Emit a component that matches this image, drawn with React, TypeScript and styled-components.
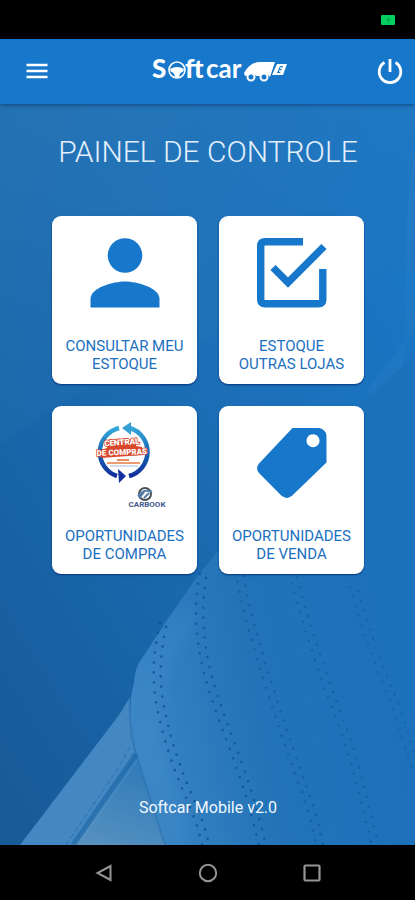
import React from "react";
import styled, { createGlobalStyle } from "styled-components";

const blue = "#1677cb";

const GlobalStyle = createGlobalStyle`
  *, *::before, *::after { box-sizing: border-box; }
  body {
    margin: 0;
    background: #000;
    font-family: Roboto, "Liberation Sans", sans-serif;
  }
`;

const Screen = styled.div`
  display: flex;
  flex-direction: column;
  min-height: 100vh;
`;

const StatusBar = styled.div`
  display: flex;
  align-items: center;
  justify-content: flex-end;
  height: 39px;
  padding: 0 20px;
  background: #000;
`;

const Header = styled.header`
  position: relative;
  z-index: 1;
  display: grid;
  grid-template-columns: 48px 1fr 48px;
  align-items: center;
  height: 65px;
  padding: 0 1px 2px 13px;
  background: ${blue};
  box-shadow: 0 1px 4px rgba(0, 30, 70, 0.55);
`;

const IconButton = styled.button`
  display: flex;
  align-items: center;
  justify-content: center;
  height: 48px;
  padding: 0;
  border: 0;
  background: none;
  color: #fff;
  cursor: pointer;
`;

const Brand = styled.div`
  display: flex;
  justify-content: center;
`;

const Main = styled.main`
  position: relative;
  z-index: 0;
  flex: 1;
  display: flex;
  flex-direction: column;
  padding: 30px 51px 26px 52px;
  background: #1c6db3;
`;

const Backdrop = styled.svg`
  position: absolute;
  inset: 0;
  z-index: -1;
  width: 100%;
  height: 100%;
`;

const Title = styled.h1`
  margin: 0 0 46px;
  color: #e3effb;
  font-size: 30px;
  font-weight: 300;
  line-height: 36px;
  text-align: center;
  white-space: nowrap;
`;

const CardGrid = styled.div`
  display: grid;
  grid-template-columns: 1fr 1fr;
  gap: 22px;
`;

const Card = styled.button`
  display: flex;
  flex-direction: column;
  align-items: center;
  justify-content: space-between;
  min-height: 168px;
  padding: 16px 0 11px;
  border: 0;
  border-radius: 9px;
  background: #fff;
  color: #1b70bf;
  font-family: inherit;
  font-size: 15px;
  line-height: 18px;
  cursor: pointer;
  box-shadow: 0 1px 2px #06357c;
`;

const CardLabel = styled.span`
  white-space: pre-line;
  text-align: center;
`;

const Version = styled.footer`
  margin-top: auto;
  color: #f1f7fd;
  font-size: 16px;
  line-height: 22px;
  text-align: center;
`;

const NavBar = styled.nav`
  display: flex;
  align-items: center;
  justify-content: center;
  gap: 56px;
  height: 55px;
  background: #000;
`;

const NavButton = styled(IconButton)`
  width: 48px;
  color: #969696;
`;

const PERFORATIONS = [
  { d: "M163 519C157 545 154 572 160 603S177 666 187 689S201 723 205 741", o: 0.75 },
  { d: "M203 470C198 492 198 518 202 545S218 606 232 643S253 705 262 741", o: 0.65 },
  { d: "M239 468C245 508 258 548 273 596S300 673 313 713L319 741", o: 0.5 },
  { d: "M292 470C304 514 318 560 338 612S358 679 375 741", o: 0.42 },
  { d: "M353 483C365 525 378 562 390 589S404 632 415 665", o: 0.32 },
];

function SeatBackdrop() {
  return (
    <Backdrop viewBox="0 0 415 741" preserveAspectRatio="xMidYMid slice" aria-hidden="true">
      <defs>
        <linearGradient id="wall" x1="1" y1="0" x2="0.1" y2="1">
          <stop offset="0" stopColor="#1978c9" />
          <stop offset="0.4" stopColor="#1c70b9" />
          <stop offset="0.75" stopColor="#1864a7" />
          <stop offset="1" stopColor="#185b99" />
        </linearGradient>
        <linearGradient id="haze" x1="0" y1="0" x2="0.5" y2="1">
          <stop offset="0" stopColor="#3479b0" stopOpacity="0.4" />
          <stop offset="1" stopColor="#2a78ba" stopOpacity="0.1" />
        </linearGradient>
        <linearGradient id="seat" gradientUnits="userSpaceOnUse" x1="130" y1="590" x2="400" y2="540">
          <stop offset="0" stopColor="#3c86c5" />
          <stop offset="0.15" stopColor="#327ebf" />
          <stop offset="0.45" stopColor="#2273b8" />
          <stop offset="1" stopColor="#1c71bb" />
        </linearGradient>
        <linearGradient id="fold" gradientUnits="userSpaceOnUse" x1="140" y1="660" x2="110" y2="745">
          <stop offset="0" stopColor="#307bb9" />
          <stop offset="1" stopColor="#5590bf" />
        </linearGradient>
        <filter id="soft" x="-20%" y="-20%" width="140%" height="140%">
          <feGaussianBlur stdDeviation="9" />
        </filter>
      </defs>
      <rect width="415" height="741" fill="url(#wall)" />
      <path d="M0 0H415V160C340 190 280 215 235 228C150 248 72 288 0 341Z" fill="url(#haze)" />
      <path d="M415 228L400 243L363 292C374 287 386 286 392 283L398 288L410 310C405 298 402 286 399 277Q403 260 405 246V150Q407 88 415 45Z" fill="#4089c7" opacity=".16" />
      <path
        d="M415 250L363 299L217 448L197 473L167 516L143 553Q135 562 134 579C127 603 131 630 138 656L165 741H415Z"
        fill="url(#seat)"
      />
      <path d="M192 510C165 545 145 570 150 625L178 735" fill="none" stroke="#529bd6" strokeWidth="12" opacity=".25" filter="url(#soft)" />
      <path d="M130 593L119 611L20 741H165L138 656Q130 630 130 593Z" fill="#4388c2" />
      <path d="M136 650L73 741H165L142 670Z" fill="url(#fold)" />
      <path d="M136 650L73 741" stroke="#1f69aa" strokeWidth="5" opacity=".7" />
      <path d="M138 655L78 741" stroke="#609bce" strokeWidth="1" opacity=".5" />
      <path d="M130 643L117 666L66 741" fill="none" stroke="#2c6faa" strokeWidth="1" strokeDasharray="5 3" />
      <path d="M130 593Q128 630 138 656L165 741" fill="none" stroke="#2468a7" strokeWidth="2" opacity=".4" />
      {PERFORATIONS.map((line) => (
        <g key={line.d} fill="none" stroke="#0c4c89" strokeLinecap="round" strokeWidth="2.600" opacity={line.o}>
          <path d={line.d} strokeDasharray="0 10" transform="translate(-3 0)" />
          <path d={line.d} strokeDasharray="0 10" strokeDashoffset="-4" transform="translate(4 0)" />
        </g>
      ))}
    </Backdrop>
  );
}

function SoftcarLogo() {
  return (
    <svg width="148" height="40" viewBox="-12 -6 148 40" role="img" aria-label="Softcar" fill="#fff">
      <g fontFamily="Lato, sans-serif" fontSize="26">
        <text x="0" y="21" fontWeight="900">S</text>
        <text x="33" y="21" fontWeight="900">ft</text>
        <text x="54" y="21" fontWeight="700">car</text>
      </g>
      <circle cx="25" cy="13" r="8" fill="none" stroke="#fff" strokeWidth="1.6" />
      <path d="M18 12Q25 8 32 12L31 15Q28 15 27 20H23Q22 15 19 15Z" />
      <path d="M92 16Q98 5 108 5H123L118 20Q115 15 111 19H104Q101 14 97 18L93 19Z" />
      <g fill={blue} stroke="#fff" strokeWidth="2">
        <circle cx="99" cy="20" r="3.500" />
        <circle cx="112" cy="20" r="3.500" />
      </g>
      <path d="M125 7H135L131 18H120Z" />
      <path d="M128 9H131L128 16H125Z" fill={blue} />
      <path d="M128 11h2M127 14h2" stroke="#fff" strokeWidth="1.500" />
    </svg>
  );
}

function PersonIcon() {
  return (
    <svg width="82" height="82" viewBox="-6 -6 82 82" fill={blue} aria-hidden="true">
      <circle cx="35" cy="17.5" r="17.3" />
      <path d="M.5 69.500V61C.5 49.500 23.500 43.500 35 43.500S69.500 49.500 69.500 61V69.500Z" />
    </svg>
  );
}

function CheckIcon() {
  return (
    <svg width="82" height="82" viewBox="-6 -6 82 82" fill="none" stroke={blue} strokeWidth="7.4" aria-hidden="true">
      <path d="M46 3.700H8.200Q3.700 3.700 3.700 8.200V61.300Q3.700 65.800 8.200 65.800H61.300Q65.800 65.800 65.800 61.300V31" />
      <path d="M16 29.500L31 44.500L67 8.500" />
    </svg>
  );
}

function TagIcon() {
  return (
    <svg width="82" height="82" viewBox="-6 -6 82 82" fill={blue} aria-hidden="true">
      <path
        fillRule="evenodd"
        d="M35.500 0H62Q65 0 67 2.500Q69.500 4.500 69.500 8V34.500L35 67.800Q30 72 24.500 67.800L2 45Q-2 40.500 2 35.500ZM56 6.200a6.500 6.500 0 1 0 .01 0Z"
      />
    </svg>
  );
}

function CentralIcon() {
  return (
    <svg width="92" height="92" viewBox="-5 0 92 92" aria-hidden="true">
      <defs>
        <linearGradient id="ring" x1="0" y1="0" x2="0" y2="1">
          <stop offset="0" stopColor="#35a8d8" />
          <stop offset="0.5" stopColor="#1467b4" />
          <stop offset="1" stopColor="#142f9d" />
        </linearGradient>
      </defs>
      <g fill="none" stroke="url(#ring)" strokeWidth="4.500">
        <path d="M35 6A25 25 0 0 0 33 54" />
        <path d="M46 6A25 25 0 0 1 45 54" />
      </g>
      <path d="M38 6L47 0V13Z" fill="#35a0d1" />
      <path d="M42 54L34 47L35 61Z" fill="#142f9d" />
      <path d="M20 19L53 15L57 32L17 35Z" fill="#fff" />
      <path d="M23 22L52 19V24L58 25V33L17 36V28L23 26Z" fill="#d9482d" />
      <g
        fontFamily="Roboto, sans-serif"
        fontWeight="900"
        fill="#fff"
        stroke="#d9482d"
        strokeWidth="1.6"
        paintOrder="stroke"
        textAnchor="middle"
      >
        <text x="38" y="23" fontSize="8" transform="rotate(-4 38 23)">CENTRAL</text>
        <text x="38" y="33" fontSize="8" transform="rotate(-2 38 33)">DE COMPRAS</text>
      </g>
      <path d="M33 38H45" stroke="#e68b64" strokeWidth="2" />
      <path d="M23 41H56" stroke="#ef9b72" strokeWidth="2" />
      <path d="M26 44H54" stroke="#a5bfdf" strokeWidth="1" />
      <circle cx="61" cy="72" r="6" fill="none" stroke="#4b5058" strokeWidth="2" />
      <path d="M54 74Q60 66 68 70M55 76L60 70M60 76L65 71" fill="none" stroke="#557da9" strokeWidth="2" />
      <text x="63" y="85" fontSize="8" fontFamily="Roboto, sans-serif" fontWeight="700" fill="#43568d" textAnchor="middle">CARBOOK</text>
    </svg>
  );
}

const CARDS = [
  { label: "CONSULTAR MEU\nESTOQUE", Icon: PersonIcon },
  { label: "ESTOQUE\nOUTRAS LOJAS", Icon: CheckIcon },
  { label: "OPORTUNIDADES\nDE COMPRA", Icon: CentralIcon },
  { label: "OPORTUNIDADES\nDE VENDA", Icon: TagIcon },
];

export default function App() {
  return (
    <Screen>
      <GlobalStyle />
      <StatusBar>
        <svg width="14" height="10" viewBox="0 0 14 10" role="img" aria-label="Bateria">
          <rect width="14" height="10" rx="1" fill="#05ce60" />
          <path d="M8 2L5 5H7L6 8L10 4H8Z" fill="#08a34c" />
        </svg>
      </StatusBar>
      <Header>
        <IconButton aria-label="Menu">
          <svg width="22" height="16" viewBox="0 0 22 16" stroke="currentColor" strokeWidth="2.600" aria-hidden="true">
            <path d="M.5 2H21.500M.5 8H21.500M.5 14H21.500" />
          </svg>
        </IconButton>
        <Brand>
          <SoftcarLogo />
        </Brand>
        <IconButton aria-label="Sair">
          <svg width="26" height="26" viewBox="0 0 26 26" fill="none" stroke="currentColor" strokeWidth="2.800" aria-hidden="true">
            <path d="M13 1V14M7.500 4.500A10.800 10.800 0 1 0 18.500 4.500" />
          </svg>
        </IconButton>
      </Header>
      <Main>
        <SeatBackdrop />
        <Title>PAINEL DE CONTROLE</Title>
        <CardGrid>
          {CARDS.map(({ label, Icon }) => (
            <Card key={label}>
              <Icon />
              <CardLabel>{label}</CardLabel>
            </Card>
          ))}
        </CardGrid>
        <Version>Softcar Mobile v2.0</Version>
      </Main>
      <NavBar aria-label="Sistema">
        <NavButton aria-label="Voltar">
          <svg width="18" height="18" viewBox="0 0 18 18" fill="none" stroke="currentColor" strokeWidth="2" aria-hidden="true">
            <path d="M15.500 2V16L2.500 9Z" />
          </svg>
        </NavButton>
        <NavButton aria-label="Início">
          <svg width="20" height="20" viewBox="0 0 20 20" fill="none" stroke="currentColor" strokeWidth="2" aria-hidden="true">
            <circle cx="10" cy="10" r="8.200" />
          </svg>
        </NavButton>
        <NavButton aria-label="Recentes">
          <svg width="18" height="18" viewBox="0 0 18 18" fill="none" stroke="currentColor" strokeWidth="2.200" aria-hidden="true">
            <rect x="1.500" y="1.500" width="15" height="15" rx="1" />
          </svg>
        </NavButton>
      </NavBar>
    </Screen>
  );
}
